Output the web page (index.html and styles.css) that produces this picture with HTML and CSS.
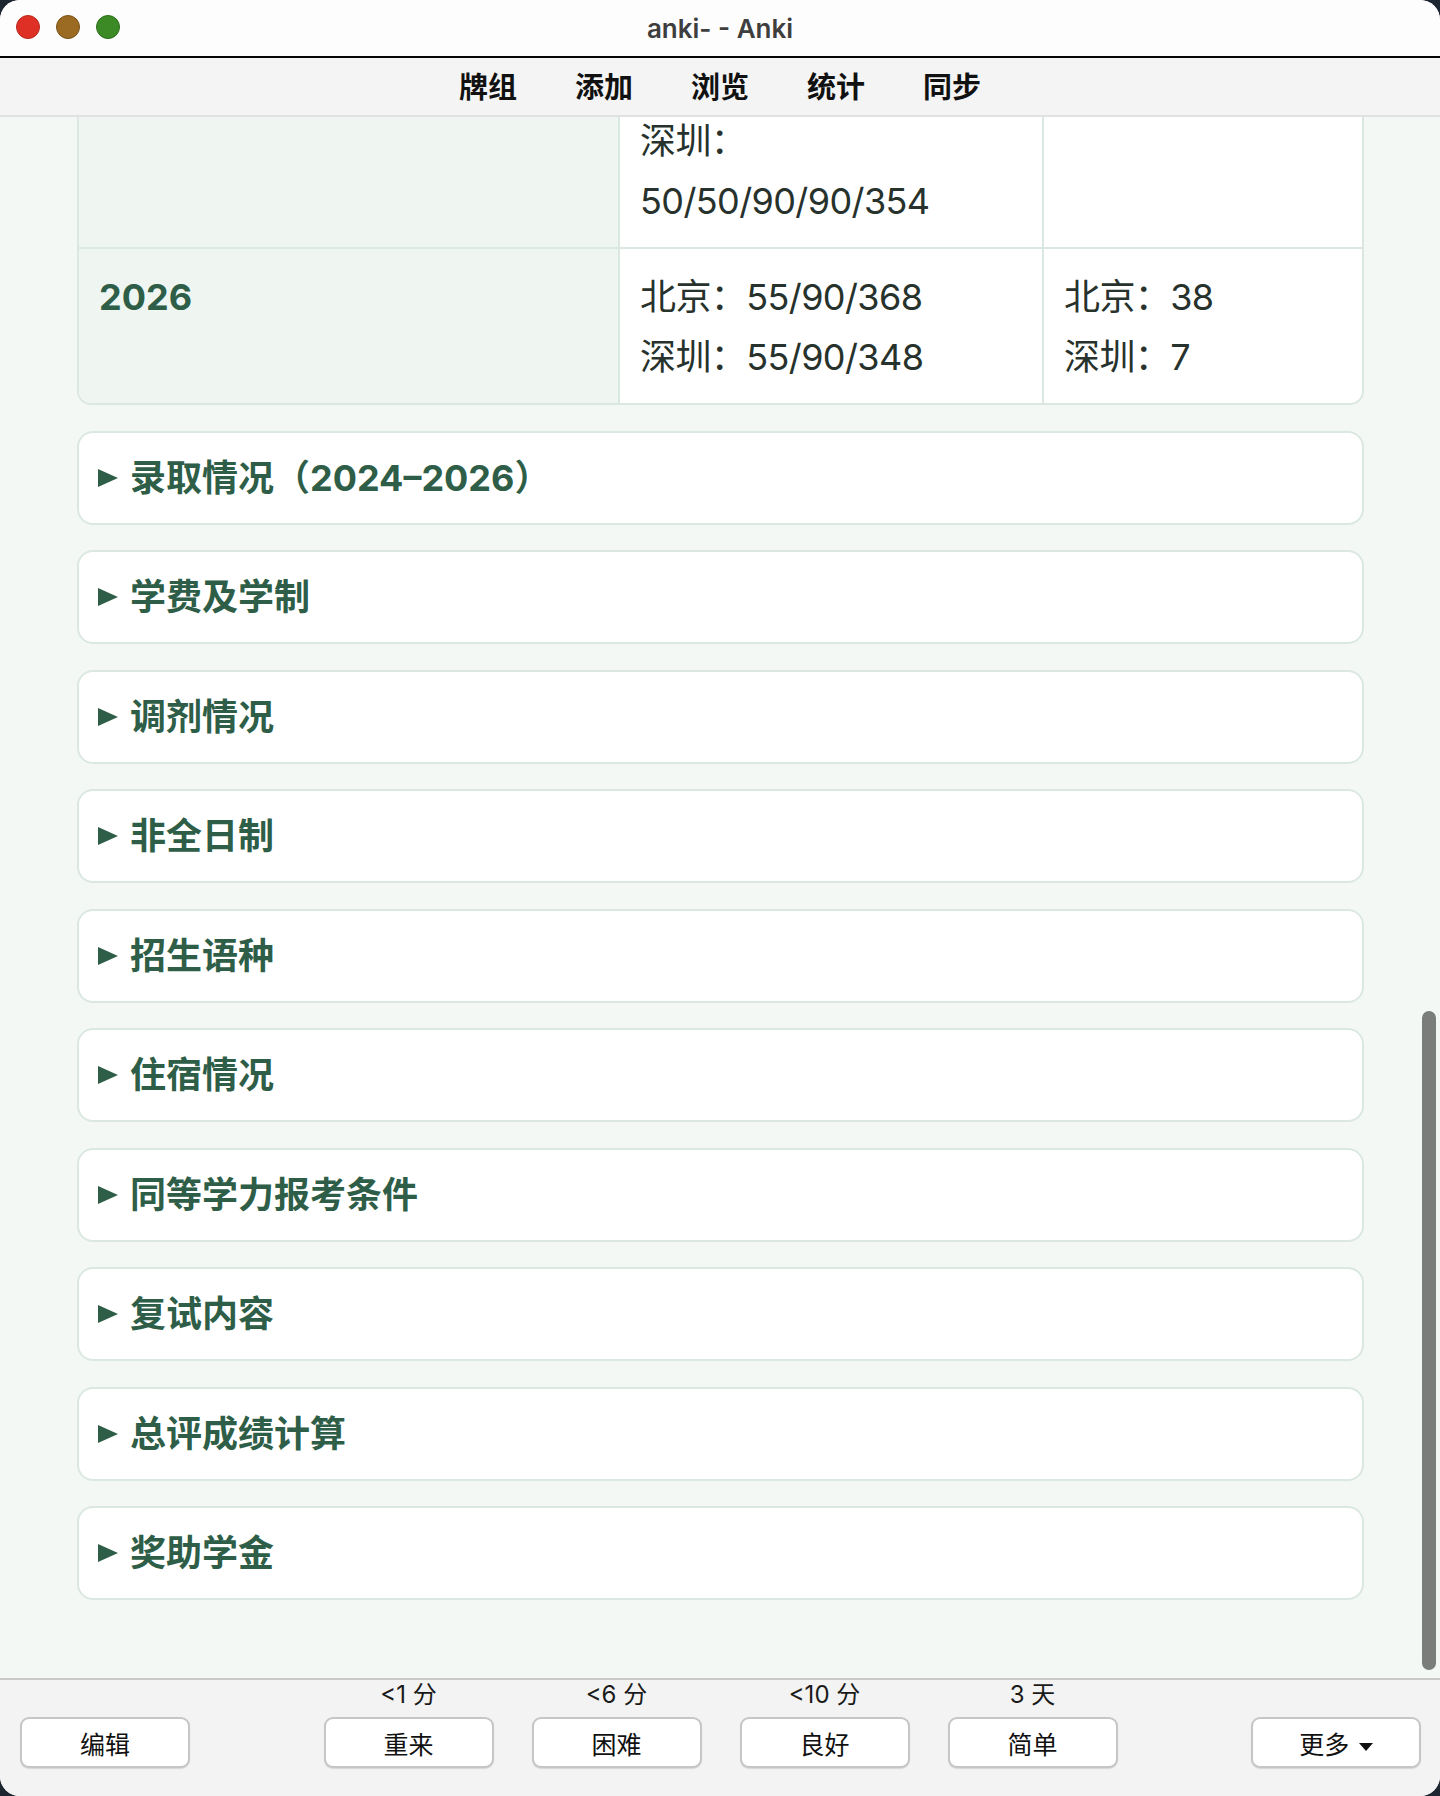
FILE: index.html
```html
<!DOCTYPE html>
<html lang="zh-CN">
<head>
    <meta charset="UTF-8">
    <meta name="viewport" content="width=device-width, initial-scale=1.0">
    <title>anki- - Anki</title>
    <link rel="stylesheet" href="styles.css">
</head>
<body>
    <div class="window">
        <header class="titlebar">
            <div class="lights">
                <span class="light red"></span>
                <span class="light amber"></span>
                <span class="light green"></span>
            </div>
            <div class="title">anki- - Anki</div>
        </header>

        <nav class="toolbar">
            <a href="#decks">牌组</a>
            <a href="#add">添加</a>
            <a href="#browse">浏览</a>
            <a href="#stats">统计</a>
            <a href="#sync">同步</a>
        </nav>

        <main class="reader">
            <div class="card-body">
                <div class="score-table">
                    <table>
                        <colgroup>
                            <col class="col-year">
                            <col class="col-line">
                            <col class="col-count">
                        </colgroup>
                        <tr>
                            <td class="year"></td>
                            <td>深圳：<br>50/50/90/90/354</td>
                            <td></td>
                        </tr>
                        <tr>
                            <td class="year">2026</td>
                            <td>北京：55/90/368<br>深圳：55/90/348</td>
                            <td>北京：38<br>深圳：7</td>
                        </tr>
                    </table>
                </div>

                <details class="section"><summary>录取情况（2024–2026）</summary></details>
                <details class="section"><summary>学费及学制</summary></details>
                <details class="section"><summary>调剂情况</summary></details>
                <details class="section"><summary>非全日制</summary></details>
                <details class="section"><summary>招生语种</summary></details>
                <details class="section"><summary>住宿情况</summary></details>
                <details class="section"><summary>同等学力报考条件</summary></details>
                <details class="section"><summary>复试内容</summary></details>
                <details class="section"><summary>总评成绩计算</summary></details>
                <details class="section"><summary>奖助学金</summary></details>
            </div>
            <div class="scroll-thumb"></div>
        </main>

        <footer class="answer-bar">
            <div class="side left">
                <button class="btn">编辑</button>
            </div>
            <div class="answers">
                <div class="answer">
                    <span class="due">&lt;1 分</span>
                    <button class="btn">重来</button>
                </div>
                <div class="answer">
                    <span class="due">&lt;6 分</span>
                    <button class="btn">困难</button>
                </div>
                <div class="answer">
                    <span class="due">&lt;10 分</span>
                    <button class="btn">良好</button>
                </div>
                <div class="answer">
                    <span class="due">3 天</span>
                    <button class="btn">简单</button>
                </div>
            </div>
            <div class="side right">
                <button class="btn">更多 <span class="caret"></span></button>
            </div>
        </footer>
    </div>
</body>
</html>
```

FILE: styles.css
```css
body {
    margin: 0;
    padding: 0;
    background-color: #1d2631;
    font-family: Inter, "Noto Sans CJK SC", sans-serif;
}

.window {
    width: 1440px;
    height: 1796px;
    border-radius: 20px;
    overflow: hidden;
    display: flex;
    flex-direction: column;
    background-color: #fdfdfd;
}

/* title bar */

.titlebar {
    height: 56px;
    flex-shrink: 0;
    position: relative;
    display: flex;
    align-items: center;
    justify-content: center;
    background-color: #fdfdfd;
    border-bottom: 2px solid #050505;
}

.lights {
    position: absolute;
    left: 16px;
    top: 15px;
    display: flex;
    gap: 16px;
}

.light {
    width: 22px;
    height: 22px;
    border-radius: 50%;
    border: 1px solid;
}

.light.red {
    background-color: #df3025;
    border-color: #b8281e;
}

.light.amber {
    background-color: #9c6b23;
    border-color: #7a5216;
}

.light.green {
    background-color: #3b8a26;
    border-color: #2c6d1b;
}

.title {
    font-size: 26px;
    font-weight: 600;
    color: #3e3e3e;
}

/* toolbar */

.toolbar {
    height: 59px;
    flex-shrink: 0;
    box-sizing: border-box;
    padding-bottom: 4px;
    display: flex;
    justify-content: center;
    align-items: center;
    background-color: #f4f4f4;
    border-bottom: 2px solid #e1e1e1;
}

.toolbar a {
    padding: 0 29px;
    font-family: "Noto Sans CJK SC", sans-serif;
    font-size: 29px;
    font-weight: bold;
    color: #111;
    text-decoration: none;
}

/* card area */

.reader {
    flex: 1;
    position: relative;
    overflow: hidden;
    background-color: #f3f8f5;
}

.card-body {
    padding: 0 76px 0 77px;
}

.score-table {
    margin-top: -26px;
    border: 2px solid #dbe8e1;
    border-radius: 14px;
    overflow: hidden;
    background-color: #fff;
}

.score-table table {
    width: 100%;
    table-layout: fixed;
    border-collapse: separate;
    border-spacing: 0;
}

.col-year {
    width: 539px;
}

.col-line {
    width: 424px;
}

.score-table td {
    padding: 18px 20px 16px;
    vertical-align: top;
    font-size: 36px;
    line-height: 60px;
    letter-spacing: -0.6px;
    color: #27322c;
    border-left: 2px solid #dbe8e1;
    border-top: 2px solid #dbe8e1;
}

.score-table td:first-child {
    border-left: none;
}

.score-table tr:first-child td {
    border-top: none;
}

.score-table td.year {
    background-color: #eff6f2;
    font-weight: bold;
    letter-spacing: 0;
    color: #2e5e47;
}

.section {
    margin-top: 25.5px;
    border: 2px solid #dbe8e1;
    border-radius: 16px;
    background-color: #fff;
}

.section summary {
    display: flex;
    align-items: center;
    list-style: none;
    padding: 20px 19px;
    font-size: 36px;
    line-height: 50px;
    font-weight: bold;
    color: #2e5e47;
    cursor: pointer;
}

.section summary::-webkit-details-marker {
    display: none;
}

.section summary::before {
    content: "";
    margin-right: 12px;
    border-left: 20px solid #2e5e47;
    border-top: 9px solid transparent;
    border-bottom: 9px solid transparent;
}

.scroll-thumb {
    position: absolute;
    right: 4px;
    top: 894px;
    width: 14px;
    height: 659px;
    border-radius: 7px;
    background-color: #7b7d7b;
}

/* answer buttons */

.answer-bar {
    height: 118px;
    flex-shrink: 0;
    display: grid;
    grid-template-columns: 1fr auto 1fr;
    align-items: end;
    padding: 0 19px 28px 20px;
    box-sizing: border-box;
    background-color: #f3f3f3;
    border-top: 2px solid #c9c9c9;
}

.side.right {
    justify-self: end;
}

.answers {
    display: flex;
    gap: 38px;
}

.answer {
    display: flex;
    flex-direction: column;
    align-items: center;
    gap: 8px;
}

.due {
    font-size: 24px;
    line-height: 28px;
    color: #1a1a1a;
}

.btn {
    width: 170px;
    height: 51px;
    padding: 0;
    border: 2px solid #c6c6c6;
    border-radius: 9px;
    background-color: #fff;
    box-shadow: 0 1px 1px rgba(0, 0, 0, 0.12);
    font-family: "Noto Sans CJK SC", sans-serif;
    font-size: 25px;
    color: #111;
    cursor: pointer;
}

.caret {
    display: inline-block;
    vertical-align: middle;
    margin-left: 4px;
    border-top: 8px solid #111;
    border-left: 7px solid transparent;
    border-right: 7px solid transparent;
}
```
